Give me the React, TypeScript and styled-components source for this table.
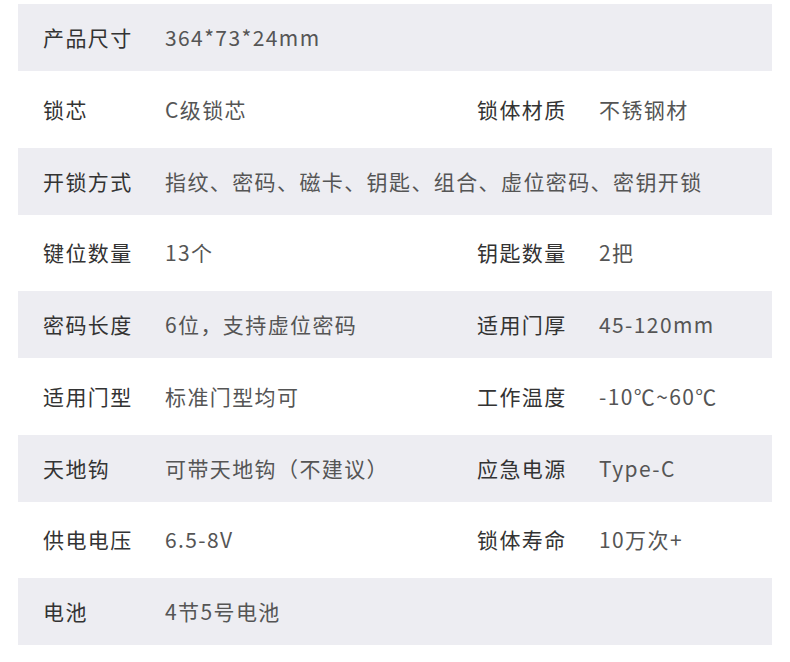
import React from "react";
import styled, { createGlobalStyle } from "styled-components";

const Global = createGlobalStyle`
  html, body { margin: 0; padding: 0; background: #ffffff; }
  body { font-family: "Noto Sans CJK SC", "Noto Sans", sans-serif; }
`;

const Page = styled.div`
  width: 790px;
  height: 662px;
  padding: 4px 18px 0 18px;
  box-sizing: border-box;
  background: #ffffff;
`;

const Table = styled.div`
  display: flex;
  flex-direction: column;
  width: 754px;
`;

const Row = styled.div<{ $shaded: boolean }>`
  display: grid;
  grid-template-columns: 122px 312px 122px 1fr;
  align-items: center;
  height: ${(p) => (p.$shaded ? "67px" : "76.5px")};
  padding-left: 25px;
  background: ${(p) => (p.$shaded ? "#ededf2" : "#ffffff")};
`;

const Label = styled.span`
  font-size: 21px;
  letter-spacing: 1.4px;
  color: #333333;
  white-space: nowrap;
  line-height: 1;
`;

const Value = styled.span<{ $span?: boolean }>`
  font-size: 21px;
  letter-spacing: 1.4px;
  color: #555555;
  white-space: nowrap;
  line-height: 1;
  ${(p) => (p.$span ? "grid-column: 2 / 5;" : "")}
`;

type Item = { k: string; v: string };
const rows: Item[][] = [
  [{ k: "产品尺寸", v: "364*73*24mm" }],
  [
    { k: "锁芯", v: "C级锁芯" },
    { k: "锁体材质", v: "不锈钢材" },
  ],
  [{ k: "开锁方式", v: "指纹、密码、磁卡、钥匙、组合、虚位密码、密钥开锁" }],
  [
    { k: "键位数量", v: "13个" },
    { k: "钥匙数量", v: "2把" },
  ],
  [
    { k: "密码长度", v: "6位，支持虚位密码" },
    { k: "适用门厚", v: "45-120mm" },
  ],
  [
    { k: "适用门型", v: "标准门型均可" },
    { k: "工作温度", v: "-10℃~60℃" },
  ],
  [
    { k: "天地钩", v: "可带天地钩（不建议）" },
    { k: "应急电源", v: "Type-C" },
  ],
  [
    { k: "供电电压", v: "6.5-8V" },
    { k: "锁体寿命", v: "10万次+" },
  ],
  [{ k: "电池", v: "4节5号电池" }],
];

export default function App() {
  return (
    <>
      <Global />
      <Page>
        <Table>
          {rows.map((r, i) => (
            <Row key={i} $shaded={i % 2 === 0}>
              {r.map((it, j) => (
                <React.Fragment key={j}>
                  <Label>{it.k}</Label>
                  <Value $span={r.length === 1}>{it.v}</Value>
                </React.Fragment>
              ))}
            </Row>
          ))}
        </Table>
      </Page>
    </>
  );
}
